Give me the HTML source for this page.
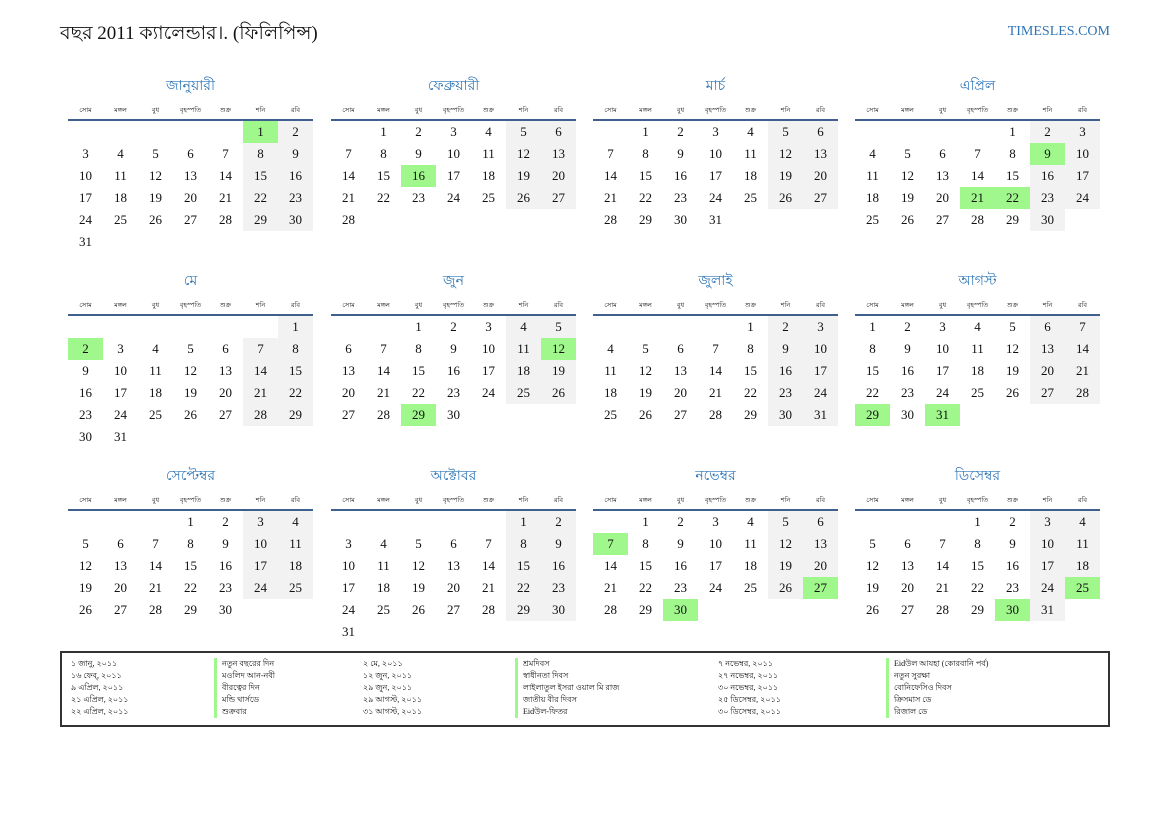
<!DOCTYPE html>
<html><head><meta charset="utf-8">
<style>
body{margin:0;width:1169px;height:827px;background:#fff;position:relative;font-family:"Liberation Serif","Noto Serif CJK SC",serif;color:#111;overflow:hidden}
.h{position:absolute;left:60px;top:19px;font-size:19px;white-space:nowrap}
.site{position:absolute;right:59px;top:24px;font-size:14px;color:#2e75b6}
.m{position:absolute;width:245px}
.t{height:20px;line-height:20px;margin-top:3px;text-align:center;color:#2e75b6;font-size:14px}
table{border-collapse:collapse;table-layout:fixed;width:245px}
td{width:35px;padding:0;text-align:center}
.wd td{height:17px;font-size:6.5px;vertical-align:middle;padding-top:5px;border-bottom:2px solid #3f5f8f}
.g td{height:22px;font-size:13px}
td.s{background:#f2f2f2}
td.x{background:#a0f78c}
.lg{position:absolute;left:60px;top:651px;width:1046px;height:72px;border:2px solid #333}
.lg div{position:absolute;font-size:8px;line-height:12px;white-space:nowrap}
.bar{border-left:3px solid #a0f78c;padding-left:5px}
</style></head><body>
<div class="h">বছর 2011 ক্যালেন্ডার।. (ফিলিপিন্স)</div>
<div class="site">TIMESLES.COM</div>

<div class="m" style="left:68px;top:74px"><div class="t">জানুয়ারী</div>
<table><tr class="wd"><td>সোম</td><td>মঙ্গল</td><td>বুধ</td><td>বৃহস্পতি</td><td>শুক্র</td><td>শনি</td><td>রবি</td></tr></table>
<table class="g">
<tr><td></td><td></td><td></td><td></td><td></td><td class="x">1</td><td class="s">2</td></tr>
<tr><td>3</td><td>4</td><td>5</td><td>6</td><td>7</td><td class="s">8</td><td class="s">9</td></tr>
<tr><td>10</td><td>11</td><td>12</td><td>13</td><td>14</td><td class="s">15</td><td class="s">16</td></tr>
<tr><td>17</td><td>18</td><td>19</td><td>20</td><td>21</td><td class="s">22</td><td class="s">23</td></tr>
<tr><td>24</td><td>25</td><td>26</td><td>27</td><td>28</td><td class="s">29</td><td class="s">30</td></tr>
<tr><td>31</td><td></td><td></td><td></td><td></td><td></td><td></td></tr>
</table></div>

<div class="m" style="left:331px;top:74px"><div class="t">ফেব্রুয়ারী</div>
<table><tr class="wd"><td>সোম</td><td>মঙ্গল</td><td>বুধ</td><td>বৃহস্পতি</td><td>শুক্র</td><td>শনি</td><td>রবি</td></tr></table>
<table class="g">
<tr><td></td><td>1</td><td>2</td><td>3</td><td>4</td><td class="s">5</td><td class="s">6</td></tr>
<tr><td>7</td><td>8</td><td>9</td><td>10</td><td>11</td><td class="s">12</td><td class="s">13</td></tr>
<tr><td>14</td><td>15</td><td class="x">16</td><td>17</td><td>18</td><td class="s">19</td><td class="s">20</td></tr>
<tr><td>21</td><td>22</td><td>23</td><td>24</td><td>25</td><td class="s">26</td><td class="s">27</td></tr>
<tr><td>28</td><td></td><td></td><td></td><td></td><td></td><td></td></tr>
</table></div>

<div class="m" style="left:593px;top:74px"><div class="t">মার্চ</div>
<table><tr class="wd"><td>সোম</td><td>মঙ্গল</td><td>বুধ</td><td>বৃহস্পতি</td><td>শুক্র</td><td>শনি</td><td>রবি</td></tr></table>
<table class="g">
<tr><td></td><td>1</td><td>2</td><td>3</td><td>4</td><td class="s">5</td><td class="s">6</td></tr>
<tr><td>7</td><td>8</td><td>9</td><td>10</td><td>11</td><td class="s">12</td><td class="s">13</td></tr>
<tr><td>14</td><td>15</td><td>16</td><td>17</td><td>18</td><td class="s">19</td><td class="s">20</td></tr>
<tr><td>21</td><td>22</td><td>23</td><td>24</td><td>25</td><td class="s">26</td><td class="s">27</td></tr>
<tr><td>28</td><td>29</td><td>30</td><td>31</td><td></td><td></td><td></td></tr>
</table></div>

<div class="m" style="left:855px;top:74px"><div class="t">এপ্রিল</div>
<table><tr class="wd"><td>সোম</td><td>মঙ্গল</td><td>বুধ</td><td>বৃহস্পতি</td><td>শুক্র</td><td>শনি</td><td>রবি</td></tr></table>
<table class="g">
<tr><td></td><td></td><td></td><td></td><td>1</td><td class="s">2</td><td class="s">3</td></tr>
<tr><td>4</td><td>5</td><td>6</td><td>7</td><td>8</td><td class="x">9</td><td class="s">10</td></tr>
<tr><td>11</td><td>12</td><td>13</td><td>14</td><td>15</td><td class="s">16</td><td class="s">17</td></tr>
<tr><td>18</td><td>19</td><td>20</td><td class="x">21</td><td class="x">22</td><td class="s">23</td><td class="s">24</td></tr>
<tr><td>25</td><td>26</td><td>27</td><td>28</td><td>29</td><td class="s">30</td><td></td></tr>
</table></div>

<div class="m" style="left:68px;top:269px"><div class="t">মে</div>
<table><tr class="wd"><td>সোম</td><td>মঙ্গল</td><td>বুধ</td><td>বৃহস্পতি</td><td>শুক্র</td><td>শনি</td><td>রবি</td></tr></table>
<table class="g">
<tr><td></td><td></td><td></td><td></td><td></td><td></td><td class="s">1</td></tr>
<tr><td class="x">2</td><td>3</td><td>4</td><td>5</td><td>6</td><td class="s">7</td><td class="s">8</td></tr>
<tr><td>9</td><td>10</td><td>11</td><td>12</td><td>13</td><td class="s">14</td><td class="s">15</td></tr>
<tr><td>16</td><td>17</td><td>18</td><td>19</td><td>20</td><td class="s">21</td><td class="s">22</td></tr>
<tr><td>23</td><td>24</td><td>25</td><td>26</td><td>27</td><td class="s">28</td><td class="s">29</td></tr>
<tr><td>30</td><td>31</td><td></td><td></td><td></td><td></td><td></td></tr>
</table></div>

<div class="m" style="left:331px;top:269px"><div class="t">জুন</div>
<table><tr class="wd"><td>সোম</td><td>মঙ্গল</td><td>বুধ</td><td>বৃহস্পতি</td><td>শুক্র</td><td>শনি</td><td>রবি</td></tr></table>
<table class="g">
<tr><td></td><td></td><td>1</td><td>2</td><td>3</td><td class="s">4</td><td class="s">5</td></tr>
<tr><td>6</td><td>7</td><td>8</td><td>9</td><td>10</td><td class="s">11</td><td class="x">12</td></tr>
<tr><td>13</td><td>14</td><td>15</td><td>16</td><td>17</td><td class="s">18</td><td class="s">19</td></tr>
<tr><td>20</td><td>21</td><td>22</td><td>23</td><td>24</td><td class="s">25</td><td class="s">26</td></tr>
<tr><td>27</td><td>28</td><td class="x">29</td><td>30</td><td></td><td></td><td></td></tr>
</table></div>

<div class="m" style="left:593px;top:269px"><div class="t">জুলাই</div>
<table><tr class="wd"><td>সোম</td><td>মঙ্গল</td><td>বুধ</td><td>বৃহস্পতি</td><td>শুক্র</td><td>শনি</td><td>রবি</td></tr></table>
<table class="g">
<tr><td></td><td></td><td></td><td></td><td>1</td><td class="s">2</td><td class="s">3</td></tr>
<tr><td>4</td><td>5</td><td>6</td><td>7</td><td>8</td><td class="s">9</td><td class="s">10</td></tr>
<tr><td>11</td><td>12</td><td>13</td><td>14</td><td>15</td><td class="s">16</td><td class="s">17</td></tr>
<tr><td>18</td><td>19</td><td>20</td><td>21</td><td>22</td><td class="s">23</td><td class="s">24</td></tr>
<tr><td>25</td><td>26</td><td>27</td><td>28</td><td>29</td><td class="s">30</td><td class="s">31</td></tr>
</table></div>

<div class="m" style="left:855px;top:269px"><div class="t">আগস্ট</div>
<table><tr class="wd"><td>সোম</td><td>মঙ্গল</td><td>বুধ</td><td>বৃহস্পতি</td><td>শুক্র</td><td>শনি</td><td>রবি</td></tr></table>
<table class="g">
<tr><td>1</td><td>2</td><td>3</td><td>4</td><td>5</td><td class="s">6</td><td class="s">7</td></tr>
<tr><td>8</td><td>9</td><td>10</td><td>11</td><td>12</td><td class="s">13</td><td class="s">14</td></tr>
<tr><td>15</td><td>16</td><td>17</td><td>18</td><td>19</td><td class="s">20</td><td class="s">21</td></tr>
<tr><td>22</td><td>23</td><td>24</td><td>25</td><td>26</td><td class="s">27</td><td class="s">28</td></tr>
<tr><td class="x">29</td><td>30</td><td class="x">31</td><td></td><td></td><td></td><td></td></tr>
</table></div>

<div class="m" style="left:68px;top:464px"><div class="t">সেপ্টেম্বর</div>
<table><tr class="wd"><td>সোম</td><td>মঙ্গল</td><td>বুধ</td><td>বৃহস্পতি</td><td>শুক্র</td><td>শনি</td><td>রবি</td></tr></table>
<table class="g">
<tr><td></td><td></td><td></td><td>1</td><td>2</td><td class="s">3</td><td class="s">4</td></tr>
<tr><td>5</td><td>6</td><td>7</td><td>8</td><td>9</td><td class="s">10</td><td class="s">11</td></tr>
<tr><td>12</td><td>13</td><td>14</td><td>15</td><td>16</td><td class="s">17</td><td class="s">18</td></tr>
<tr><td>19</td><td>20</td><td>21</td><td>22</td><td>23</td><td class="s">24</td><td class="s">25</td></tr>
<tr><td>26</td><td>27</td><td>28</td><td>29</td><td>30</td><td></td><td></td></tr>
</table></div>

<div class="m" style="left:331px;top:464px"><div class="t">অক্টোবর</div>
<table><tr class="wd"><td>সোম</td><td>মঙ্গল</td><td>বুধ</td><td>বৃহস্পতি</td><td>শুক্র</td><td>শনি</td><td>রবি</td></tr></table>
<table class="g">
<tr><td></td><td></td><td></td><td></td><td></td><td class="s">1</td><td class="s">2</td></tr>
<tr><td>3</td><td>4</td><td>5</td><td>6</td><td>7</td><td class="s">8</td><td class="s">9</td></tr>
<tr><td>10</td><td>11</td><td>12</td><td>13</td><td>14</td><td class="s">15</td><td class="s">16</td></tr>
<tr><td>17</td><td>18</td><td>19</td><td>20</td><td>21</td><td class="s">22</td><td class="s">23</td></tr>
<tr><td>24</td><td>25</td><td>26</td><td>27</td><td>28</td><td class="s">29</td><td class="s">30</td></tr>
<tr><td>31</td><td></td><td></td><td></td><td></td><td></td><td></td></tr>
</table></div>

<div class="m" style="left:593px;top:464px"><div class="t">নভেম্বর</div>
<table><tr class="wd"><td>সোম</td><td>মঙ্গল</td><td>বুধ</td><td>বৃহস্পতি</td><td>শুক্র</td><td>শনি</td><td>রবি</td></tr></table>
<table class="g">
<tr><td></td><td>1</td><td>2</td><td>3</td><td>4</td><td class="s">5</td><td class="s">6</td></tr>
<tr><td class="x">7</td><td>8</td><td>9</td><td>10</td><td>11</td><td class="s">12</td><td class="s">13</td></tr>
<tr><td>14</td><td>15</td><td>16</td><td>17</td><td>18</td><td class="s">19</td><td class="s">20</td></tr>
<tr><td>21</td><td>22</td><td>23</td><td>24</td><td>25</td><td class="s">26</td><td class="x">27</td></tr>
<tr><td>28</td><td>29</td><td class="x">30</td><td></td><td></td><td></td><td></td></tr>
</table></div>

<div class="m" style="left:855px;top:464px"><div class="t">ডিসেম্বর</div>
<table><tr class="wd"><td>সোম</td><td>মঙ্গল</td><td>বুধ</td><td>বৃহস্পতি</td><td>শুক্র</td><td>শনি</td><td>রবি</td></tr></table>
<table class="g">
<tr><td></td><td></td><td></td><td>1</td><td>2</td><td class="s">3</td><td class="s">4</td></tr>
<tr><td>5</td><td>6</td><td>7</td><td>8</td><td>9</td><td class="s">10</td><td class="s">11</td></tr>
<tr><td>12</td><td>13</td><td>14</td><td>15</td><td>16</td><td class="s">17</td><td class="s">18</td></tr>
<tr><td>19</td><td>20</td><td>21</td><td>22</td><td>23</td><td class="s">24</td><td class="x">25</td></tr>
<tr><td>26</td><td>27</td><td>28</td><td>29</td><td class="x">30</td><td class="s">31</td><td></td></tr>
</table></div>

<div class="lg">
<div style="left:9px;top:5px">১ জানু, ২০১১<br>১৬ ফেব্, ২০১১<br>৯ এপ্রিল, ২০১১<br>২১ এপ্রিল, ২০১১<br>২২ এপ্রিল, ২০১১</div>
<div style="left:152px;top:5px" class="bar">নতুন বছরের দিন<br>মওলিদ আন-নবী<br>বীরত্বের দিন<br>মন্ডি থার্সডে<br>শুক্রবার</div>
<div style="left:301px;top:5px">২ মে, ২০১১<br>১২ জুন, ২০১১<br>২৯ জুন, ২০১১<br>২৯ আগস্ট, ২০১১<br>৩১ আগস্ট, ২০১১</div>
<div style="left:453px;top:5px" class="bar">শ্রমদিবস<br>স্বাধীনতা দিবস<br>লাইলাতুল ইসরা ওয়াল মি রাজ<br>জাতীয় বীর দিবস<br>Eidউল-ফিতর</div>
<div style="left:656px;top:5px">৭ নভেম্বর, ২০১১<br>২৭ নভেম্বর, ২০১১<br>৩০ নভেম্বর, ২০১১<br>২৫ ডিসেম্বর, ২০১১<br>৩০ ডিসেম্বর, ২০১১</div>
<div style="left:824px;top:5px" class="bar">Eidউল আযহা (কোরবানি পর্ব)<br>নতুন সুরক্ষা<br>বোনিফেসিও দিবস<br>ক্রিসমাস ডে<br>রিজাল ডে</div>
</div>
</body></html>
